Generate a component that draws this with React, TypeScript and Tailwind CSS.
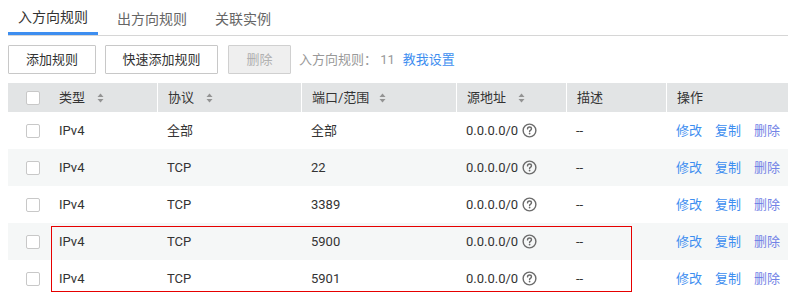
import React from "react";

const SortIcon = ({ ml = 12 }: { ml?: number }) => (
  <svg width="7" height="10" viewBox="0 0 7 10" className="shrink-0" style={{ marginLeft: ml }}>
    <path d="M3.5 0.5 L6.5 4 L0.5 4 Z" fill="#939393" />
    <path d="M0.5 6 L6.5 6 L3.5 9.5 Z" fill="#939393" />
  </svg>
);

const HelpIcon = () => (
  <svg width="15" height="15" viewBox="0 0 16 16" className="ml-[4px] shrink-0">
    <circle cx="8" cy="8" r="6.8" fill="none" stroke="#6b6b6b" strokeWidth="1.5" />
    <path d="M5.9 6.3 C5.9 4.9 6.9 4.2 8 4.2 C9.2 4.2 10.1 5 10.1 6.1 C10.1 7.1 9.4 7.5 8.8 7.9 C8.3 8.2 8.1 8.5 8.1 9.2" fill="none" stroke="#6b6b6b" strokeWidth="1.5" strokeLinecap="round" />
    <circle cx="8.1" cy="11.3" r="0.95" fill="#6b6b6b" />
  </svg>
);

const Checkbox = () => (
  <span className="inline-block w-[14px] h-[14px] border border-[#c8c8c8] rounded-[2px] bg-white shrink-0" />
);

const cols = "grid grid-cols-[149px_144px_155px_110px_100px_1fr]";

const rows = [
  { proto: "全部", port: "全部" },
  { proto: "TCP", port: "22" },
  { proto: "TCP", port: "3389" },
  { proto: "TCP", port: "5900" },
  { proto: "TCP", port: "5901" },
];

export default function App() {
  return (
    <div
      className="w-[788px] h-[294px] overflow-hidden bg-white pl-[8px] relative text-[13px] text-[#333]"
      style={{ fontFamily: '"Roboto", "Noto Sans CJK SC", "Noto Sans", sans-serif' }}
    >
      {/* Tabs */}
      <div className="flex h-[36px] border-b border-[#d6d6d6] text-[14px]">
        <div className="h-[35px] w-[90px] flex items-center justify-center border-b-[3px] border-[#3d8ef0] text-[#333] pt-[3px]">
          入方向规则
        </div>
        <div className="h-[35px] w-[108px] flex items-center justify-center text-[#666] pt-[3px]">
          出方向规则
        </div>
        <div className="h-[35px] w-[70px] flex items-center justify-center text-[#666] pt-[3px] pl-[4px]">
          关联实例
        </div>
      </div>

      {/* Toolbar */}
      <div className="flex items-center mt-[9px] h-[29px]">
        <button className="h-[29px] w-[88px] border border-[#c8c8c8] bg-white text-[#333] rounded-[1px]">
          添加规则
        </button>
        <button className="h-[29px] w-[113px] ml-[9px] border border-[#c8c8c8] bg-white text-[#333] rounded-[1px]">
          快速添加规则
        </button>
        <button className="h-[29px] w-[63px] ml-[10px] border border-[#d0d0d0] bg-[#efefef] text-[#b0b0b0] rounded-[1px]">
          删除
        </button>
        <span className="ml-[8px] text-[#999]">入方向规则： 11</span>
        <span className="ml-[8px] text-[#3d8ef0]">教我设置</span>
      </div>

      {/* Table */}
      <div className="mt-[9px]">
        <div className={`${cols} h-[29px] bg-[#e2e4e5] text-[#333]`}>
          <div className="flex items-center pl-[18px]">
            <Checkbox />
            <span className="ml-[19px]">类型</span>
            <SortIcon />
          </div>
          <div className="flex items-center pl-[10px] border-l border-white">
            <span>协议</span>
            <SortIcon />
          </div>
          <div className="flex items-center pl-[10px] border-l border-white">
            <span>端口/范围</span>
            <SortIcon ml={10} />
          </div>
          <div className="flex items-center pl-[10px] border-l border-white">
            <span>源地址</span>
            <SortIcon />
          </div>
          <div className="flex items-center pl-[10px] border-l border-white">描述</div>
          <div className="flex items-center pl-[10px] border-l border-white">操作</div>
        </div>
        {rows.map((r, i) => (
          <div
            key={i}
            className={`${cols} h-[37px] ${i % 2 === 1 ? "bg-[#f5f7f7]" : "bg-white"}`}
          >
            <div className="flex items-center pl-[18px]">
              <Checkbox />
              <span className="ml-[19px]">IPv4</span>
            </div>
            <div className="flex items-center pl-[10px]">{r.proto}</div>
            <div className="flex items-center pl-[10px]">{r.port}</div>
            <div className="flex items-center pl-[10px]">
              <span>0.0.0.0/0</span>
              <HelpIcon />
            </div>
            <div className="flex items-center pl-[10px]">--</div>
            <div className="flex items-center pl-[10px]">
              <span className="text-[#3d8ef0]">修改</span>
              <span className="ml-[13px] text-[#3d8ef0]">复制</span>
              <span className="ml-[13px] text-[#7383e6]">删除</span>
            </div>
          </div>
        ))}
      </div>

      {/* Annotation box */}
      <div className="absolute left-[51px] top-[226px] w-[581px] h-[66px] border border-[#e60000] pointer-events-none" />
    </div>
  );
}
